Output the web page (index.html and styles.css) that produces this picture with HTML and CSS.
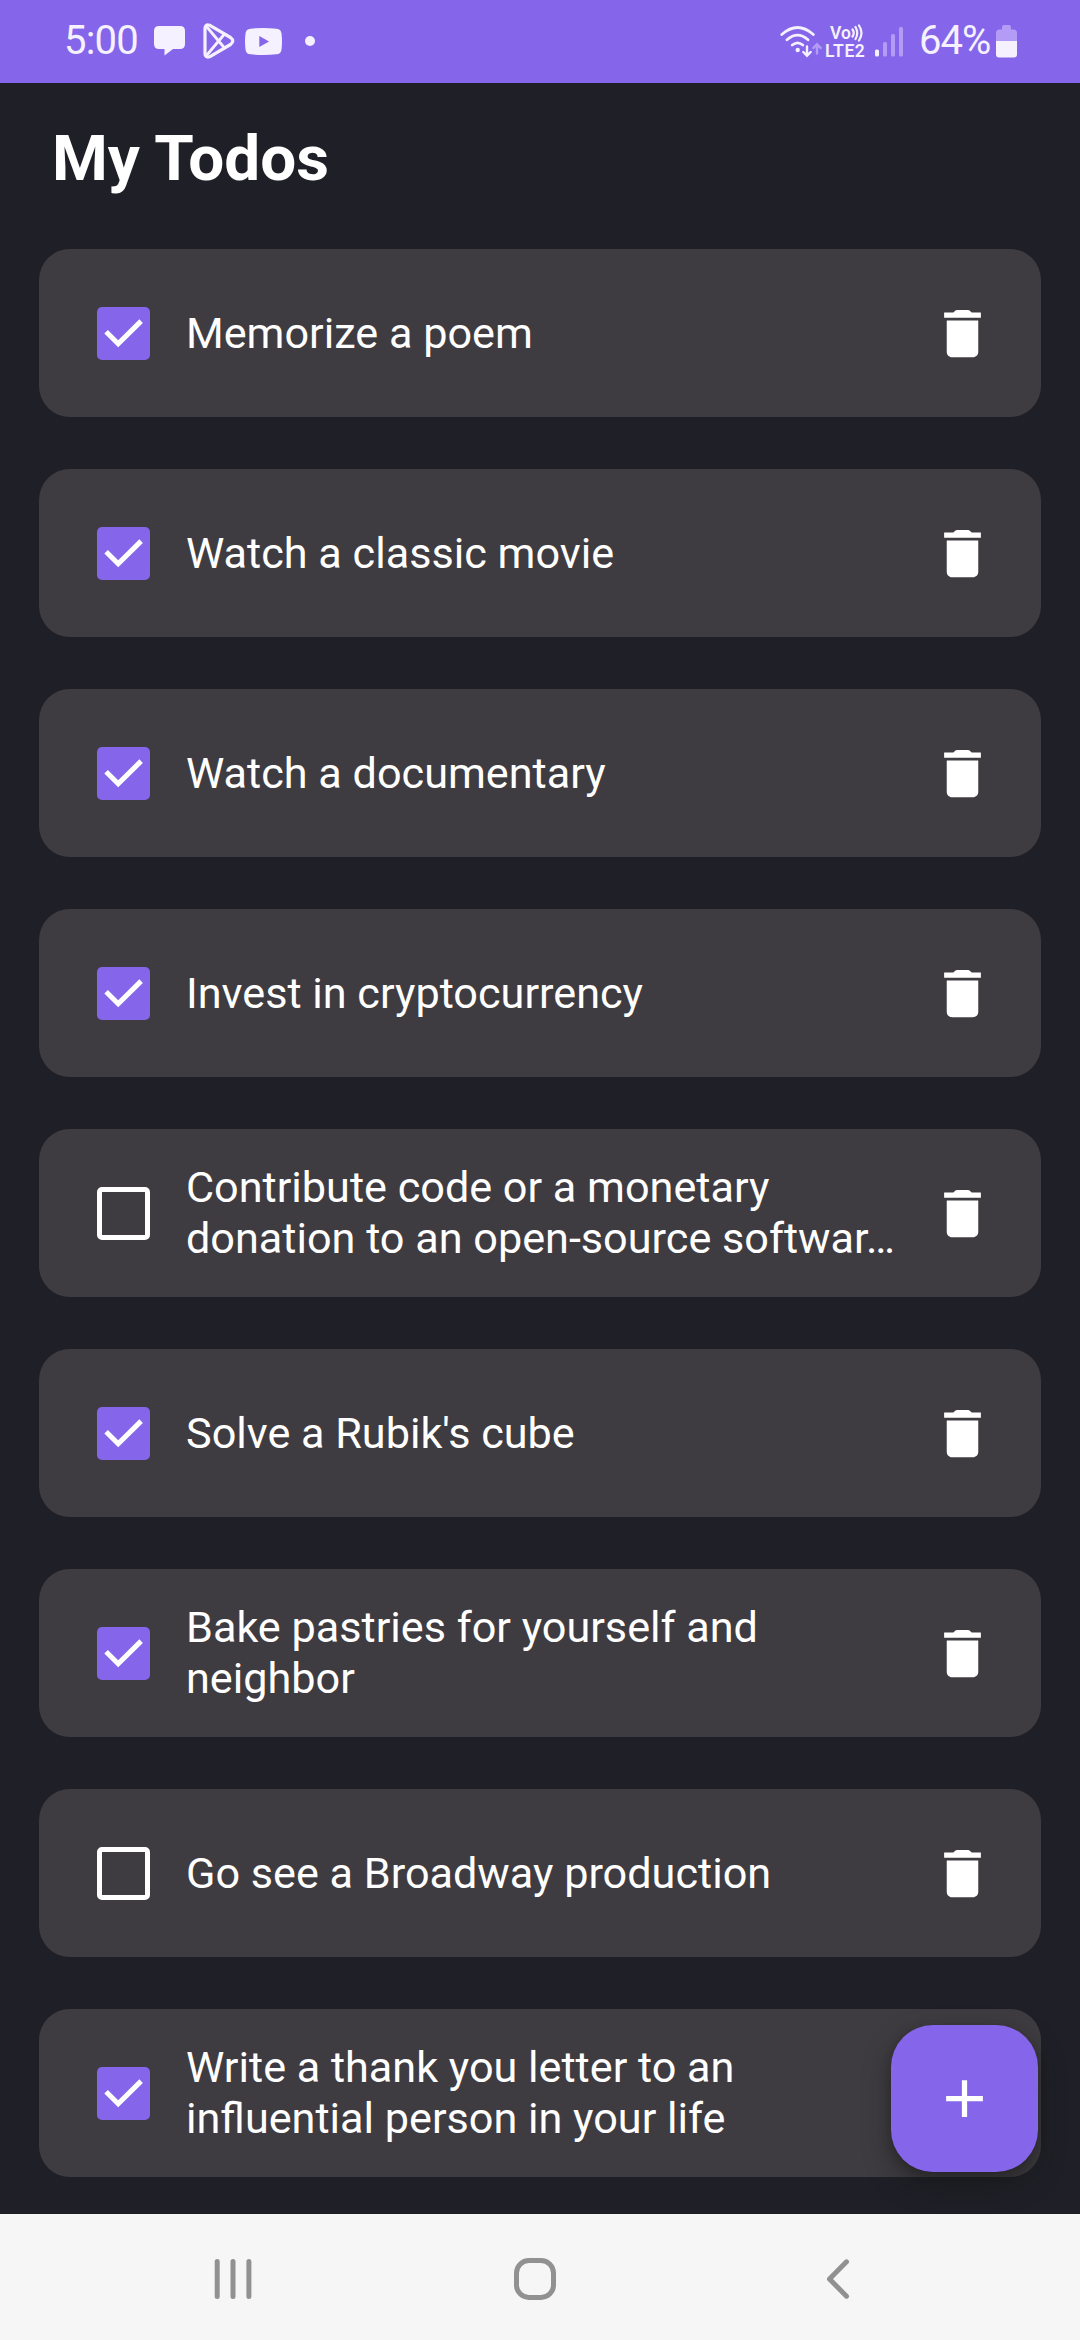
FILE: index.html
```html
<!DOCTYPE html>
<html lang="en">
<head>
<meta charset="utf-8">
<title>My Todos</title>
<link rel="stylesheet" href="styles.css">
</head>
<body>
<svg class="sprite" aria-hidden="true">
  <symbol id="trash" viewBox="0 0 24 24"><path d="M6 19c0 1.1.9 2 2 2h8c1.1 0 2-.9 2-2V7H6v12zM19 4h-3.5l-.71-.71c-.18-.18-.44-.29-.7-.29H9.91c-.26 0-.52.11-.7.29L8.5 4H5v2h14V4z"/></symbol>
  <symbol id="check" viewBox="0 0 53 53"><path d="M9.100 24.700 21.200 36.800 44.100 14.100" fill="none" stroke="#fff" stroke-width="5"/></symbol>
</svg>
<div class="screen">
  <header class="status">
    <div class="status-left">
      <span class="clock">5:00</span>
      <svg class="ic-chat" width="31" height="30" viewBox="0 0 31 30"><path d="M5 0h21q5 0 5 5v13q0 5-5 5h-7l-8.500 6.500v-6.500H5q-5 0-5-5V5q0-5 5-5z"/></svg>
      <svg class="ic-play" width="32" height="36" viewBox="0 0 32 36"><g fill="none" stroke="#f5f1fe" stroke-linejoin="round" stroke-linecap="round"><path stroke-width="3.200" d="M2 5.500Q2 1 6.500 2.200L27.500 14.500Q32 18 27.500 21.500L6.500 33.800Q2 35 2 30.500Z"/><path stroke-width="2.800" d="M3.500 3.500 21.500 25M3.500 32.500 21.500 11"/></g></svg>
      <svg class="ic-tube" width="37" height="27" viewBox="0 0 37 27"><path fill-rule="evenodd" d="M5.500.7Q18.500-.7 31.500.7 36 1 36.500 5.500 37.500 13.500 36.500 21.500 36 26 31.500 26.300 18.500 27.700 5.500 26.300 1 26 .5 21.500-.5 13.500.5 5.500 1 1 5.500.7zM14.300 8v11l9.700-5.500z"/></svg>
      <span class="dot"></span>
    </div>
    <div class="status-right">
      <svg class="ic-wifi" width="42" height="32" viewBox="0 0 42 32"><g fill="none" stroke="#f5f1fe" stroke-width="2.800" stroke-linecap="round"><path d="M1.800 8.500Q17.500-5.500 33.300 8.500M7 13.800Q17.500 4.500 28 13.800M12.300 19Q17.500 14.700 22.800 19"/><path stroke-width="2.400" d="M27 20.500V29.500M23.300 26 27 29.700 30.700 26"/><path stroke="#b39cf5" stroke-width="2.400" d="M37 27.500V18.500M33.300 22 37 18.300 40.700 22"/></g><circle cx="17.700" cy="24" r="2.200"/></svg>
      <div class="volte">
        <span class="vo">Vo<svg width="13" height="18" viewBox="0 0 13 18"><path fill="none" stroke="#f5f1fe" stroke-width="2.200" stroke-linecap="round" d="M1.500 5.500Q4 9 1.500 12.500M4.500 3Q8 9 4.500 15M8 1.500Q13 9 8 16.500"/></svg></span>
        <span>LTE2</span>
      </div>
      <svg class="ic-signal" width="28" height="30" viewBox="0 0 28 30"><rect x="0" y="22.500" width="4" height="7" rx="1.500"/><g fill="#b39cf5"><rect x="8" y="15" width="4" height="14.500" rx="1.500"/><rect x="16" y="7" width="4" height="22.500" rx="1.500"/><rect x="24" y="0" width="4" height="29.500" rx="1.500"/></g></svg>
      <span class="percent">64%</span>
      <svg class="ic-batt" width="21" height="33" viewBox="0 0 21 33"><path fill="#b39cf5" d="M6 4.500V2Q6 0 8 0h5q2 0 2 2v2.500h2.500q3.500 0 3.500 3.500v8H0V8q0-3.500 3.500-3.500z"/><path d="M0 16h21v13.500q0 3-3 3H3q-3 0-3-3z"/></svg>
    </div>
  </header>

  <main class="content">
    <h1>My Todos</h1>
    <ul class="list">
      <li class="card"><span class="box on"><svg><use href="#check"/></svg></span><p>Memorize a poem</p><svg class="trash"><use href="#trash"/></svg></li>
      <li class="card"><span class="box on"><svg><use href="#check"/></svg></span><p>Watch a classic movie</p><svg class="trash"><use href="#trash"/></svg></li>
      <li class="card"><span class="box on"><svg><use href="#check"/></svg></span><p>Watch a documentary</p><svg class="trash"><use href="#trash"/></svg></li>
      <li class="card"><span class="box on"><svg><use href="#check"/></svg></span><p>Invest in cryptocurrency</p><svg class="trash"><use href="#trash"/></svg></li>
      <li class="card"><span class="box"></span><p>Contribute code or a monetary<br>donation to an open-source softwar…</p><svg class="trash"><use href="#trash"/></svg></li>
      <li class="card"><span class="box on"><svg><use href="#check"/></svg></span><p>Solve a Rubik's cube</p><svg class="trash"><use href="#trash"/></svg></li>
      <li class="card"><span class="box on"><svg><use href="#check"/></svg></span><p>Bake pastries for yourself and<br>neighbor</p><svg class="trash"><use href="#trash"/></svg></li>
      <li class="card"><span class="box"></span><p>Go see a Broadway production</p><svg class="trash"><use href="#trash"/></svg></li>
      <li class="card"><span class="box on"><svg><use href="#check"/></svg></span><p>Write a thank you letter to an<br>influential person in your life</p></li>
    </ul>
    <button class="fab" aria-label="Add"><svg width="63" height="63" viewBox="0 0 24 24"><path d="M19 13h-6v6h-2v-6H5v-2h6V5h2v6h6v2z"/></svg></button>
  </main>

  <nav class="navbar">
    <svg width="38" height="42" viewBox="0 0 38 42"><path d="M3.200 3.500v35M19 3.500v35M34.900 3.500v35"/></svg>
    <svg class="home" width="42" height="42" viewBox="0 0 42 42"><rect x="2.500" y="2.500" width="37" height="37" rx="12.500"/></svg>
    <svg width="24" height="42" viewBox="0 0 24 42"><path d="M20.500 3.800 3.500 21 20.500 38.200"/></svg>
  </nav>
</div>
</body>
</html>
```
FILE: styles.css
```css
* { box-sizing: border-box; }
body { margin: 0; font-family: Roboto, "Noto Sans", sans-serif; color: #fff; background: #1f1f27; }
svg { display: block; flex: none; fill: #f5f1fe; }
.sprite { position: absolute; width: 0; height: 0; }
.screen { width: 1080px; height: 2340px; display: flex; flex-direction: column; overflow: hidden; }

.status { height: 83px; flex: none; display: flex; justify-content: space-between; background: #8566ea; color: #f5f1fe; padding: 0 63px 0 64px; }
.status-left, .status-right { display: flex; align-items: flex-start; }
.clock, .percent { font-size: 40px; line-height: 47px; margin-top: 17px; white-space: nowrap; }
.clock { width: 90px; letter-spacing: -0.8px; }
.ic-chat { margin-top: 26px; }
.ic-play { margin: 23px 0 0 18px; }
.ic-tube { margin: 28px 0 0 10px; }
.dot { width: 10px; height: 10px; border-radius: 50%; background: #f5f1fe; margin: 36px 0 0 23px; }
.ic-wifi { margin-top: 26px; }
.volte { width: 41px; margin: 24px 0 0 3px; display: flex; flex-direction: column; font-size: 17.500px; font-weight: 600; line-height: 18px; letter-spacing: 0.6px; }
.vo { display: flex; padding-left: 5px; letter-spacing: 0; }
.ic-signal { margin: 27px 0 0 9px; }
.percent { width: 72px; margin-left: 16px; letter-spacing: -1px; }
.ic-batt { margin: 25px 0 0 5px; }

.content { height: 2131px; flex: none; position: relative; padding: 0 39px; }
h1 { margin: 0; padding: 38px 0 0 13px; height: 166px; font-size: 63.800px; line-height: 76px; font-weight: 700; }
.list { list-style: none; margin: 0; padding: 0; display: flex; flex-direction: column; gap: 52px; }
.card { height: 168px; display: flex; align-items: center; padding: 0 47px 0 58px; background: #3f3c41; border-radius: 31px; }
.box { width: 53px; height: 53px; flex: none; border: 5px solid #fff; border-radius: 5px; }
.box.on { border: 0; background: #8566ea; }
.box svg { width: 53px; height: 53px; }
.card p { flex: 1; margin: 0 0 0 36px; font-size: 43.200px; line-height: 51px; white-space: nowrap; }
.trash { width: 63px; height: 63px; fill: #fff; }
.fab { position: absolute; right: 42px; bottom: 42px; width: 147px; height: 147px; padding: 0; border: 0; border-radius: 42px; background: #8566ea; display: flex; align-items: center; justify-content: center; box-shadow: 0 12px 26px rgba(20, 22, 20, .5), 0 3px 8px rgba(20, 22, 20, .2); }
.fab svg { fill: #fff; }

.navbar { flex: 1; background: #f6f6f6; display: flex; align-items: flex-start; padding: 44px 0 0 214px; }
.navbar svg { fill: none; stroke: #919191; stroke-width: 5; stroke-linecap: round; stroke-linejoin: round; }
.navbar .home { margin: 0 270px 0 262px; }
```
